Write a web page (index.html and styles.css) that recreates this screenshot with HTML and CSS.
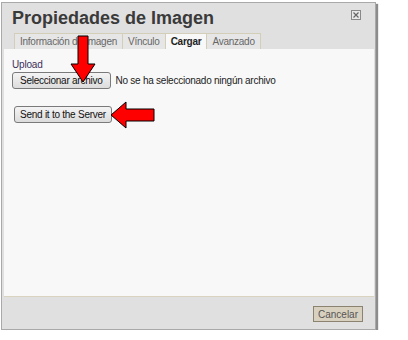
FILE: index.html
```html
<!DOCTYPE html>
<html lang="es">
<head>
    <meta charset="UTF-8">
    <title>Propiedades de Imagen</title>
    <link rel="stylesheet" href="styles.css">
</head>
<body>

<div class="dialog">
    <div class="dialog-head">
        <div class="title-row">
            <h2 class="title">Propiedades de Imagen</h2>
            <span class="close-btn">
                <svg width="10" height="10" viewBox="0 0 10 10">
                    <rect x="0.5" y="0.5" width="9" height="9" fill="#e8e8e8" stroke="#888"/>
                    <path d="M2.5 2.5 L7.5 7.5 M7.5 2.5 L2.5 7.5" stroke="#666" stroke-width="1.2"/>
                </svg>
            </span>
        </div>
        <div class="tabs">
            <span class="tab">Información de Imagen</span>
            <span class="tab">Vínculo</span>
            <span class="tab active">Cargar</span>
            <span class="tab">Avanzado</span>
        </div>
    </div>

    <div class="dialog-body">
        <label class="upload-label">Upload</label>
        <div class="file-row">
            <button class="btn file-btn">Seleccionar archivo</button>
            <span class="file-name">No se ha seleccionado ningún archivo</span>
        </div>
        <button class="btn send-btn">Send it to the Server</button>
    </div>

    <div class="dialog-foot">
        <button class="cancel-btn">Cancelar</button>
    </div>

    <!-- red pointers drawn over the dialog -->
    <svg class="arrow arrow-down" width="28" height="50" viewBox="0 0 28 50">
        <path d="M9 1 H19 V29 H26 L14 47 L2 29 H9 Z" fill="#f00" stroke="#000" stroke-width="1"/>
    </svg>
    <svg class="arrow arrow-left" width="46" height="28" viewBox="0 0 46 28">
        <path d="M1 14 L16 1 V8 H44 V20 H16 V27 Z" fill="#f00" stroke="#000" stroke-width="1"/>
    </svg>
</div>

</body>
</html>
```

FILE: styles.css
```css
body {
    margin: 0;
    padding: 0;
    background: #fff;
    font-family: "Liberation Sans", Arial, sans-serif;
}

.dialog {
    position: relative;
    width: 373px;
    height: 326px;
    margin: 2px 0 0 1px;
    border: 1px solid #a9a9a9;
    box-shadow: 2px 2px 1px #8c8c8c;
    background: #e0e0e0;
    display: flex;
    flex-direction: column;
}

.dialog-head {
    padding: 0 0 0 10px;
}

.title-row {
    display: flex;
    align-items: center;
    justify-content: space-between;
    height: 30px;
}

.title {
    margin: 0;
    font-size: 18px;
    font-weight: bold;
    color: #3a3a3a;
    line-height: 30px;
}

.close-btn {
    display: flex;
    margin-right: 14px;
    margin-top: -6px;
}

.tabs {
    display: flex;
    margin-left: 2px;
    height: 16px;
}

.tab {
    padding: 1px 5px 0;
    font-size: 10px;
    letter-spacing: -0.25px;
    line-height: 14px;
    color: #666;
    background: #e6e6e6;
    border: 1px solid #d3ceb8;
    border-bottom: none;
    margin-right: -1px;
}

.tab.active {
    background: #f8f8f8;
    color: #222;
    font-weight: bold;
    position: relative;
    z-index: 1;
}

.dialog-body {
    flex: 1;
    background: #f8f8f8;
    margin: 0 1px 0 2px;
    padding: 9px 8px;
    border-bottom: 1px solid #d8d4c0;
}

.upload-label {
    display: block;
    font-size: 10px;
    letter-spacing: -0.2px;
    color: #3c2f5a;
    line-height: 13px;
}

.file-row {
    display: flex;
    align-items: center;
    gap: 5px;
    margin-top: 1px;
}

.file-name {
    font-size: 10px;
    letter-spacing: -0.25px;
    color: #222;
}

.btn {
    height: 17px;
    padding: 0 5px;
    font-family: "Liberation Sans", Arial, sans-serif;
    font-size: 10px;
    letter-spacing: -0.25px;
    color: #111;
    background: linear-gradient(#f4f4f4, #dcdcdc);
    border: 1px solid #7a7a7a;
    border-radius: 3px;
}

.file-btn {
    padding: 0 7px;
}

.send-btn {
    margin: 17px 0 0 2px;
}

.dialog-foot {
    height: 32px;
    display: flex;
    justify-content: flex-end;
    align-items: flex-start;
    padding: 9px 12px 0 0;
    box-sizing: border-box;
}

.cancel-btn {
    height: 16px;
    padding: 0 4px;
    font-family: "Liberation Sans", Arial, sans-serif;
    font-size: 10px;
    color: #555;
    background: #d9d1c0;
    border: 1px solid #8b8270;
}

.arrow {
    position: absolute;
}

.arrow-down {
    left: 67px;
    top: 32px;
}

.arrow-left {
    left: 108px;
    top: 98px;
}
```
